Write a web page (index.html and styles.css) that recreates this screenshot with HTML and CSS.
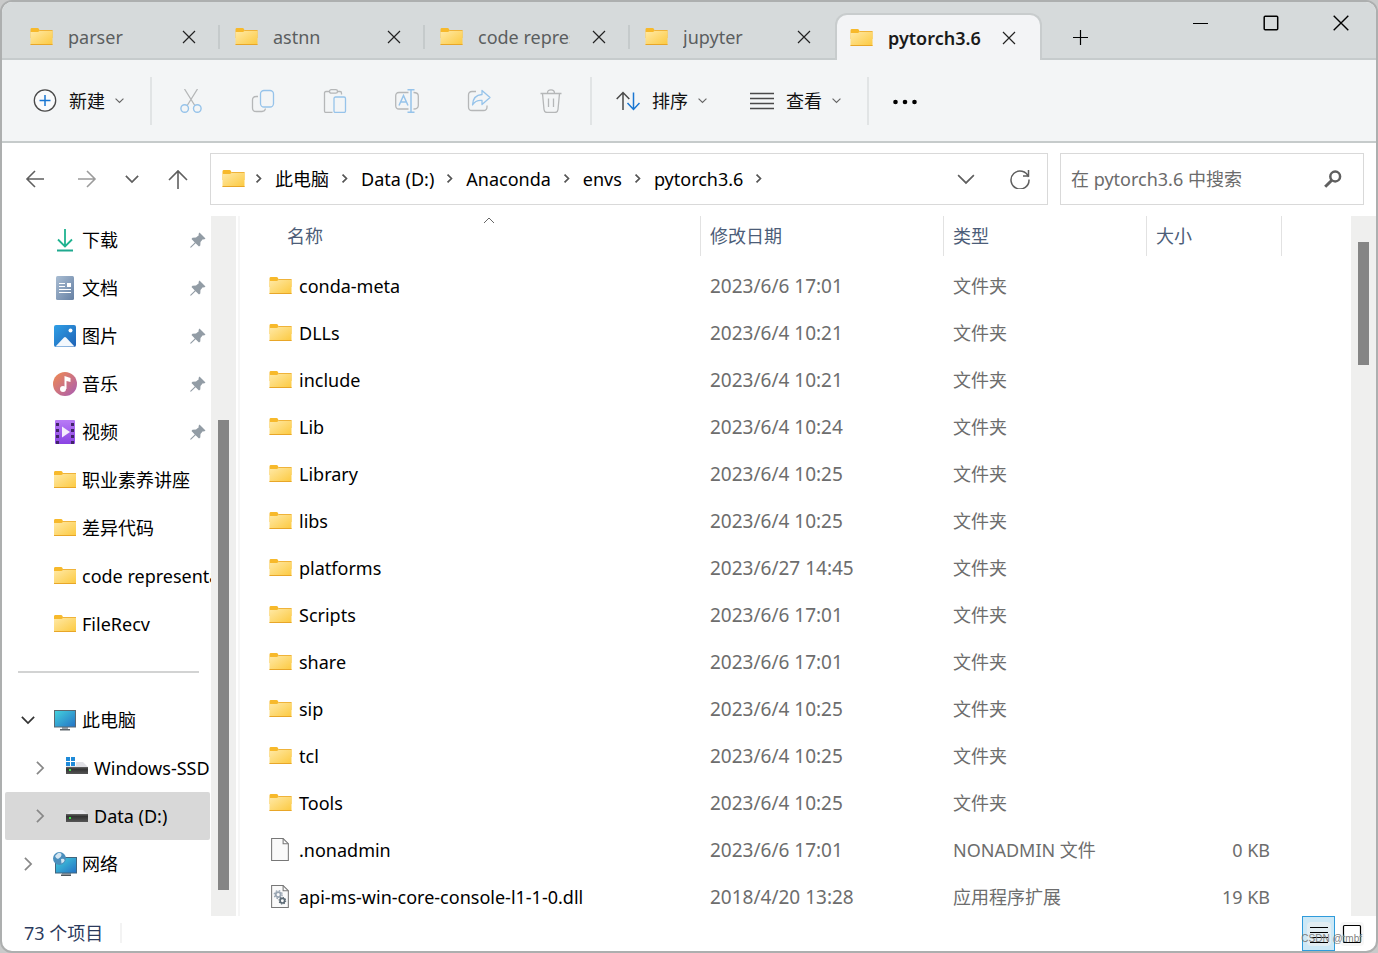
FILE: index.html
```html
<!DOCTYPE html>
<html lang="zh-CN">
<head>
<meta charset="utf-8">
<title>pytorch3.6</title>
<link rel="stylesheet" href="styles.css">
</head>
<body>
<svg class="sprite" aria-hidden="true">
  <defs>
    <linearGradient id="gFolder" x1="0" y1="0" x2="1" y2="1"><stop offset="0" stop-color="#ffe9a6"/><stop offset="1" stop-color="#fcc93f"/></linearGradient>
    <linearGradient id="gDown" x1="0" y1="0" x2="0" y2="1"><stop offset="0" stop-color="#2fc98a"/><stop offset="1" stop-color="#16a095"/></linearGradient>
    <linearGradient id="gDoc" x1="0" y1="0" x2="1" y2="1"><stop offset="0" stop-color="#a9bdd3"/><stop offset="1" stop-color="#6680a3"/></linearGradient>
    <linearGradient id="gPic" x1="0" y1="0" x2="1" y2="1"><stop offset="0" stop-color="#2f9fe6"/><stop offset="1" stop-color="#1f62b5"/></linearGradient>
    <linearGradient id="gMusic" x1="0" y1="0" x2="1" y2="1"><stop offset="0" stop-color="#f28b4e"/><stop offset="1" stop-color="#a85cb4"/></linearGradient>
    <linearGradient id="gVideo" x1="0" y1="0" x2="0" y2="1"><stop offset="0" stop-color="#b87bf6"/><stop offset="1" stop-color="#8a43e3"/></linearGradient>
    <linearGradient id="gScreen" x1="0" y1="0" x2="1" y2="1"><stop offset="0" stop-color="#44d3de"/><stop offset="1" stop-color="#2471c4"/></linearGradient>
    <linearGradient id="gDrive" x1="0" y1="0" x2="0" y2="1"><stop offset="0" stop-color="#666"/><stop offset="0.3" stop-color="#333"/><stop offset="1" stop-color="#555"/></linearGradient>
  </defs>
  <symbol id="folder" viewBox="0 0 22 18"><path d="M0 1.5Q0 0 1 0h6q1 0 1.500 1l.5 1.500H22V10H0z" fill="#f7b92b"/><path d="M0 4h7.500l1.500-1H22v14H0z" fill="url(#gFolder)"/><path d="M0 16.500h22" stroke="#e8a628"/><path d="M9 2.500h13" stroke="#efb33a"/></symbol>
  <symbol id="x" viewBox="0 0 14 14"><path d="M1 1l12 12M13 1L1 13" fill="none" stroke="currentColor" stroke-width="1.200"/></symbol>
  <symbol id="chev-down" viewBox="0 0 16 16"><path d="M1 4.500l7 7 7-7" fill="none" stroke="currentColor" stroke-width="var(--sw,1.500)"/></symbol>
  <symbol id="chev-right" viewBox="0 0 16 16"><path d="M4.500 1l7 7-7 7" fill="none" stroke="currentColor" stroke-width="var(--sw,1.500)"/></symbol>
  <symbol id="pin" viewBox="0 0 16 16"><path d="M9.500 0.500L15.500 6.500 14 7.500 12.800 7.200 10.500 10 10.300 13.500 9 14.500 5.600 11.200 1.200 15.600.2 15.800.4 14.800 4.800 10.400 1.500 7l1-1.200L6 5.500 8.800 3.200 8.500 2z" fill="#929ca5"/></symbol>
  <symbol id="drive" viewBox="0 0 22 12"><path d="M5 0h12l5 5H0z" fill="#e6e6ea"/><path d="M0 4h22v8H0z" fill="url(#gDrive)"/><path d="M3 7h2v2H3z" fill="#3ce04a"/></symbol>
</svg>

<div class="window">
  <header class="titlebar">
    <div class="tabs" role="tablist">
      <div class="tab"><svg class="folder"><use href="#folder"/></svg><span class="tab-name">parser</span><button class="tab-close" aria-label="关闭"><svg class="s14"><use href="#x"/></svg></button></div>
      <div class="tab"><svg class="folder"><use href="#folder"/></svg><span class="tab-name">astnn</span><button class="tab-close" aria-label="关闭"><svg class="s14"><use href="#x"/></svg></button></div>
      <div class="tab"><svg class="folder"><use href="#folder"/></svg><span class="tab-name">code representation</span><button class="tab-close" aria-label="关闭"><svg class="s14"><use href="#x"/></svg></button></div>
      <div class="tab last"><svg class="folder"><use href="#folder"/></svg><span class="tab-name">jupyter</span><button class="tab-close" aria-label="关闭"><svg class="s14"><use href="#x"/></svg></button></div>
      <div class="tab active"><svg class="folder"><use href="#folder"/></svg><span class="tab-name">pytorch3.6</span><button class="tab-close" aria-label="关闭"><svg class="s14"><use href="#x"/></svg></button></div>
      <button class="tab-new" aria-label="新标签页"><svg class="s16" viewBox="0 0 16 16"><path d="M8.500 1v15M1 8.500h15" stroke="currentColor" stroke-width="1.200"/></svg></button>
    </div>
    <div class="controls">
      <button aria-label="最小化"><svg class="s16" viewBox="0 0 16 16"><path d="M0 8.500h15" stroke="#000"/></svg></button>
      <button aria-label="最大化"><svg class="s16" viewBox="0 0 16 16"><rect x="1.200" y="1.200" width="13.500" height="13.500" rx="1" fill="none" stroke="#000" stroke-width="1.500"/></svg></button>
      <button aria-label="关闭窗口"><svg class="s16" viewBox="0 0 16 16"><path d="M.7.700l14.600 14.600M15.300.7L.7 15.300" stroke="#000" stroke-width="1.400"/></svg></button>
    </div>
  </header>

  <div class="toolbar" role="toolbar">
    <button class="tool new"><svg class="s24" viewBox="0 0 24 24"><circle cx="12" cy="11.500" r="10.700" fill="#fafbfc" stroke="#4a4a4a" stroke-width="1.300"/><path d="M12 6v11M6.500 11.500h11" stroke="#1976d2" stroke-width="1.500"/></svg><span>新建</span><svg class="s9"><use href="#chev-down"/></svg></button>
    <i class="sep"></i>
    <div class="icon-tools">
      <button aria-label="剪切" disabled><svg class="s24" viewBox="0 0 24 24"><path d="M5.500 0L15.800 16.500M18.500 0L8.200 16.500" stroke="#b5b7b8" stroke-width="1.300"/><g fill="none" stroke="#96c3ea" stroke-width="1.400"><circle cx="5.700" cy="19.500" r="3.800"/><circle cx="18.300" cy="19.500" r="3.800"/></g></svg></button>
      <button aria-label="复制" disabled><svg class="s24" viewBox="0 0 24 24" fill="none" stroke-width="1.300"><path d="M7 7.500H5Q1.500 7.500 1.500 11v8q0 3.500 3.500 3.500h6q3 0 3.500-3" stroke="#b5b7b8"/><rect x="9.500" y="1.500" width="13" height="16.500" rx="3.500" stroke="#96c3ea"/></svg></button>
      <button aria-label="粘贴" disabled><svg class="s24" viewBox="0 0 24 24" fill="none" stroke-width="1.300"><path d="M6.500 2.500H3q-1.500 0-1.500 1.500v18q0 1.500 1.500 1.500h6.500M14 2.500h3q1.500 0 1.500 1.500v1.500" stroke="#b5b7b8"/><rect x="6.500" y=".7" width="8" height="3.500" rx="1.700" stroke="#b5b7b8"/><rect x="11" y="8" width="11.500" height="15.500" rx="1.500" stroke="#96c3ea"/></svg></button>
      <button aria-label="重命名" disabled><svg class="s24" viewBox="0 0 24 24" fill="none" stroke-width="1.300"><path d="M13.500 3.500H4Q.7 3.500.7 7v9.500Q.7 20 4 20h9.500M18.500 3.500q4.800 0 4.800 3.500v9.500q0 3.500-4.800 3.500" stroke="#b5b7b8"/><path d="M16 .5v23M12.500.7h7M12.500 23.300h7M4 16.500L8.500 6.500 13 16.500M5.500 13h6" stroke="#96c3ea" stroke-width="1.500"/></svg></button>
      <button aria-label="共享" disabled><svg class="s24" viewBox="0 0 24 24" fill="none" stroke-width="1.300" stroke-linejoin="round"><path d="M9 2.500H5Q1.500 2.500 1.500 6v12q0 3.500 3.500 3.500h11.500q3.500 0 3.500-3.500v-1.500" stroke="#b5b7b8"/><path d="M15 1.500l8 7-8 7v-4q-6.500-.5-9.500 4.500Q6 6 15 5.500z" stroke="#96c3ea"/></svg></button>
      <button aria-label="删除" disabled><svg class="s24" viewBox="0 0 24 24" fill="none" stroke="#b5b7b8" stroke-width="1.300"><path d="M1.500 4.500h21M8.500 4q0-3.200 3.500-3.200T15.500 4M3.500 4.500l1.500 16q.3 3 3 3h8q2.700 0 3-3l1.500-16M9.500 9.500v8.500M14.500 9.500v8.500"/></svg></button>
    </div>
    <i class="sep"></i>
    <button class="tool sort"><svg class="s24" viewBox="0 0 24 24" fill="none" stroke-width="1.500"><path d="M7 21V4M.7 10L7 3.500l6.300 6.500" stroke="#4a4a4a"/><path d="M17.500 3.500V20.500M11.500 14l6 6.500 6-6.500" stroke="#1976d2"/></svg><span>排序</span><svg class="s9"><use href="#chev-down"/></svg></button>
    <button class="tool view"><svg class="s24" viewBox="0 0 24 24"><path d="M0 4.500h24M0 9.500h24M0 14.500h24M0 19.500h24" stroke="#4a4a4a" stroke-width="1.300"/></svg><span>查看</span><svg class="s9"><use href="#chev-down"/></svg></button>
    <i class="sep"></i>
    <button class="more" aria-label="更多"><svg class="s24" viewBox="0 0 24 24"><circle cx="2.500" cy="13" r="2.300"/><circle cx="12" cy="13" r="2.300"/><circle cx="21.500" cy="13" r="2.300"/></svg></button>
  </div>

  <div class="navbar">
    <div class="nav-buttons">
      <button class="b-back" aria-label="后退"><svg class="s20" viewBox="0 0 20 20"><path d="M19 10H2M10 2L2 10l8 8" fill="none" stroke="#5f5f5f" stroke-width="1.600"/></svg></button>
      <button class="b-fwd" aria-label="前进"><svg class="s20" viewBox="0 0 20 20"><path d="M1 10h17M10 2l8 8-8 8" fill="none" stroke="#9b9b9b" stroke-width="1.600"/></svg></button>
      <button class="b-recent" aria-label="最近"><svg class="s14 thick"><use href="#chev-down"/></svg></button>
      <button class="b-up" aria-label="上移"><svg class="s20" viewBox="0 0 20 20"><path d="M10 20V2M1 11l9-9 9 9" fill="none" stroke="#5f5f5f" stroke-width="1.600"/></svg></button>
    </div>
    <nav class="address">
      <svg class="folder"><use href="#folder"/></svg>
      <svg class="crumb"><use href="#chev-right"/></svg><button>此电脑</button>
      <svg class="crumb"><use href="#chev-right"/></svg><button>Data (D:)</button>
      <svg class="crumb"><use href="#chev-right"/></svg><button>Anaconda</button>
      <svg class="crumb"><use href="#chev-right"/></svg><button>envs</button>
      <svg class="crumb"><use href="#chev-right"/></svg><button>pytorch3.6</button>
      <svg class="crumb"><use href="#chev-right"/></svg>
      <span class="grow"></span>
      <button class="drop" aria-label="以前的位置"><svg class="s18"><use href="#chev-down"/></svg></button>
      <button class="refresh" aria-label="刷新"><svg class="s20" viewBox="0 0 20 20"><path d="M18.500 8A9 9 0 1 0 19 10.500M18.500 1v6h-5.500" fill="none" stroke="#5f5f5f" stroke-width="1.500"/></svg></button>
    </nav>
    <div class="search">
      <input type="search" placeholder="在 pytorch3.6 中搜索" aria-label="在 pytorch3.6 中搜索">
      <button aria-label="搜索"><svg class="s18" viewBox="0 0 18 18"><circle cx="11.200" cy="6.500" r="4.900" fill="none" stroke="#5f5f5f" stroke-width="2.500"/><path d="M7.800 10.200L1.200 16.800" stroke="#5f5f5f" stroke-width="3"/></svg></button>
    </div>
  </div>

  <main class="content">
    <aside class="sidebar">
      <a class="item" href="#"><svg class="ico" viewBox="0 0 24 24"><path d="M12 1v17M5 11.500l7 7 7-7" fill="none" stroke="#1fb390" stroke-width="1.800"/><path d="M4 22.500h16" stroke="#1fa98f" stroke-width="2"/></svg><span>下载</span><svg class="pin"><use href="#pin"/></svg></a>
      <a class="item" href="#"><svg class="ico" viewBox="0 0 24 24"><rect x="3" width="18" height="24" rx="1.500" fill="url(#gDoc)"/><path d="M6 7.500h6M6 10.500h6M6 13.500h12M6 16.500h12" stroke="#fff" stroke-width="1.200"/><path d="M14 7h4v4h-4z" fill="#fff"/></svg><span>文档</span><svg class="pin"><use href="#pin"/></svg></a>
      <a class="item" href="#"><svg class="ico" viewBox="0 0 24 24"><rect x="1" y="1" width="22" height="22" rx="2" fill="url(#gPic)"/><path d="M2.500 22.500L11 13.500q1-1 2 0l8.500 9z" fill="#f3f8fd"/><circle cx="17.500" cy="6.500" r="2" fill="#fff"/></svg><span>图片</span><svg class="pin"><use href="#pin"/></svg></a>
      <a class="item" href="#"><svg class="ico" viewBox="0 0 24 24"><circle cx="12" cy="12" r="12" fill="url(#gMusic)"/><circle cx="10" cy="17" r="3" fill="#fff"/><path d="M11.500 4l6 2v4l-4-1v8h-2z" fill="#fff"/></svg><span>音乐</span><svg class="pin"><use href="#pin"/></svg></a>
      <a class="item" href="#"><svg class="ico" viewBox="0 0 24 24"><rect x="2" width="20" height="24" rx="1" fill="url(#gVideo)"/><path d="M4.500 3v21M19.500 3v21" stroke="#42246b" stroke-width="3" stroke-dasharray="3 3"/><path d="M9 6.500l8 5.500-8 5.500z" fill="#f4ecfc"/></svg><span>视频</span><svg class="pin"><use href="#pin"/></svg></a>
      <a class="item" href="#"><svg class="ico-folder"><use href="#folder"/></svg><span>职业素养讲座</span></a>
      <a class="item" href="#"><svg class="ico-folder"><use href="#folder"/></svg><span>差异代码</span></a>
      <a class="item" href="#"><svg class="ico-folder"><use href="#folder"/></svg><span>code representation</span></a>
      <a class="item" href="#"><svg class="ico-folder"><use href="#folder"/></svg><span>FileRecv</span></a>
      <div class="divider"></div>
      <a class="item root" href="#"><svg class="s14 dark"><use href="#chev-down"/></svg><svg class="ico" viewBox="0 0 24 24"><path d="M9 19h6v2H9z" fill="#9aa3aa"/><path d="M7 21h10v1.500H7z" fill="#5e666c"/><rect x="1.500" y="2.500" width="21" height="16.500" fill="url(#gScreen)" stroke="#5c6870"/></svg><span>此电脑</span></a>
      <a class="item sub" href="#"><svg class="s14 light"><use href="#chev-right"/></svg><svg class="ico" viewBox="0 0 24 24"><path d="M6 6h12l5 5H1z" fill="#e1e1e6"/><path d="M1 11h22v7H1z" fill="url(#gDrive)"/><path d="M4 13h2v2H4z" fill="#3ce04a"/><path d="M1 1h10v9H1z" fill="#fff"/><path d="M1 1h4v4H1zM6 1h4v4H6zM1 6h4v4H1zM6 6h4v4H6z" fill="#1f8ad8"/></svg><span>Windows-SSD (C:)</span></a>
      <a class="item sub selected" href="#"><svg class="s14 light"><use href="#chev-right"/></svg><svg class="ico-drive"><use href="#drive"/></svg><span>Data (D:)</span></a>
      <a class="item root" href="#"><svg class="s14 light"><use href="#chev-right"/></svg><svg class="ico" viewBox="0 0 24 24"><path d="M9 21h9v1.500H9z" fill="#9aa3aa"/><path d="M8 22.500h10V24H8z" fill="#4e565c"/><rect x="2.500" y="5.500" width="21" height="15.500" fill="url(#gScreen)" stroke="#41657d"/><circle cx="6.500" cy="6.500" r="6.500" fill="#4b8fbd"/><path d="M2 4q4-5 6-2.500T5 7q-2 0-3-3zM8 7q3-1 3.500 1T8.500 11.500z" fill="#d3e6f2"/></svg><span>网络</span></a>
    </aside>
    <div class="scrollbar side-scroll"><div class="thumb"></div></div>

    <section class="files">
      <table>
        <colgroup><col class="c-name"><col class="c-date"><col class="c-type"><col class="c-size"><col></colgroup>
        <thead><tr>
          <th><div class="head first">名称<svg class="sort-mark" viewBox="0 0 12 7"><path d="M1 6l5-5 5 5" fill="none" stroke="#666"/></svg></div></th>
          <th><div class="head">修改日期</div></th><th><div class="head">类型</div></th><th><div class="head">大小</div></th><th></th>
        </tr></thead>
        <tbody>
          <tr><td><div class="name"><svg class="folder"><use href="#folder"/></svg>conda-meta</div></td><td class="date">2023/6/6 17:01</td><td>文件夹</td><td></td><td></td></tr>
          <tr><td><div class="name"><svg class="folder"><use href="#folder"/></svg>DLLs</div></td><td class="date">2023/6/4 10:21</td><td>文件夹</td><td></td><td></td></tr>
          <tr><td><div class="name"><svg class="folder"><use href="#folder"/></svg>include</div></td><td class="date">2023/6/4 10:21</td><td>文件夹</td><td></td><td></td></tr>
          <tr><td><div class="name"><svg class="folder"><use href="#folder"/></svg>Lib</div></td><td class="date">2023/6/4 10:24</td><td>文件夹</td><td></td><td></td></tr>
          <tr><td><div class="name"><svg class="folder"><use href="#folder"/></svg>Library</div></td><td class="date">2023/6/4 10:25</td><td>文件夹</td><td></td><td></td></tr>
          <tr><td><div class="name"><svg class="folder"><use href="#folder"/></svg>libs</div></td><td class="date">2023/6/4 10:25</td><td>文件夹</td><td></td><td></td></tr>
          <tr><td><div class="name"><svg class="folder"><use href="#folder"/></svg>platforms</div></td><td class="date">2023/6/27 14:45</td><td>文件夹</td><td></td><td></td></tr>
          <tr><td><div class="name"><svg class="folder"><use href="#folder"/></svg>Scripts</div></td><td class="date">2023/6/6 17:01</td><td>文件夹</td><td></td><td></td></tr>
          <tr><td><div class="name"><svg class="folder"><use href="#folder"/></svg>share</div></td><td class="date">2023/6/6 17:01</td><td>文件夹</td><td></td><td></td></tr>
          <tr><td><div class="name"><svg class="folder"><use href="#folder"/></svg>sip</div></td><td class="date">2023/6/4 10:25</td><td>文件夹</td><td></td><td></td></tr>
          <tr><td><div class="name"><svg class="folder"><use href="#folder"/></svg>tcl</div></td><td class="date">2023/6/4 10:25</td><td>文件夹</td><td></td><td></td></tr>
          <tr><td><div class="name"><svg class="folder"><use href="#folder"/></svg>Tools</div></td><td class="date">2023/6/4 10:25</td><td>文件夹</td><td></td><td></td></tr>
          <tr><td><div class="name"><svg class="page" viewBox="0 0 22 22"><path d="M2.500.5h11l5 5v16h-16z" fill="#fafafa" stroke="#777"/><path d="M13.500.5v5h5" fill="none" stroke="#777"/></svg>.nonadmin</div></td><td class="date">2023/6/6 17:01</td><td>NONADMIN 文件</td><td class="size">0 KB</td><td></td></tr>
          <tr><td><div class="name"><svg class="page" viewBox="0 0 22 22"><path d="M2.500.5h11l5 5v16h-16z" fill="#fafafa" stroke="#777"/><path d="M13.500.5v5h5" fill="none" stroke="#777"/><circle cx="8.800" cy="9.200" r="2.400" fill="none" stroke="#9aa6b3" stroke-width="1.800"/><circle cx="8.800" cy="9.200" r="3.800" fill="none" stroke="#9aa6b3" stroke-width="1.200" stroke-dasharray="1.500 1.500"/><circle cx="12.800" cy="15" r="2.200" fill="none" stroke="#5d6b76" stroke-width="1.600"/><circle cx="12.800" cy="15" r="3.200" fill="none" stroke="#5d6b76" stroke-dasharray="1.200 1.300"/></svg>api-ms-win-core-console-l1-1-0.dll</div></td><td class="date">2018/4/20 13:28</td><td>应用程序扩展</td><td class="size">19 KB</td><td></td></tr>
        </tbody>
      </table>
    </section>
    <div class="scrollbar main-scroll"><div class="thumb"></div></div>
  </main>

  <footer class="status">
    <span class="count">73 个项目</span>
    <div class="modes">
      <button class="mode on" aria-label="详细信息"><svg viewBox="0 0 24 24" class="s24"><path d="M3 5.500h18M3 10.500h18M3 15.500h18M3 20.500h18" stroke="#000"/></svg></button>
      <button class="mode" aria-label="大图标"><svg viewBox="0 0 24 24" class="s24"><rect x="3.500" y="3.500" width="17" height="17" rx="1" fill="#fff" stroke="#000" stroke-width="1.200"/></svg></button>
    </div>
    <span class="watermark">CSDN @tmbf</span>
  </footer>
</div>
</body>
</html>
```
FILE: styles.css
```css
* { box-sizing: border-box; }

body {
  margin: 0;
  height: 100vh;
  background: #c9caca;
  color: #000;
  font: 18px/24px "Noto Sans", "Noto Sans CJK SC", sans-serif;
}

button {
  margin: 0;
  padding: 0;
  border: 0;
  background: none;
  color: inherit;
  font: inherit;
  display: flex;
  align-items: center;
  justify-content: center;
}

svg { display: block; flex: none; }
.sprite { position: absolute; width: 0; height: 0; }

.folder { width: 23px; height: 18px; }
.s9 { width: 9px; height: 9px; }
.s14 { width: 14px; height: 14px; }
.s16 { width: 16px; height: 16px; }
.s18 { width: 18px; height: 18px; }
.s20 { width: 20px; height: 20px; }
.s24 { width: 24px; height: 24px; }

.window {
  height: 100vh;
  display: flex;
  flex-direction: column;
  border: 2px solid #adafaf;
  border-radius: 12px;
  background: #fff;
  overflow: hidden;
}

/* title bar and tabs */
.titlebar {
  flex: none;
  height: 58px;
  display: flex;
  justify-content: space-between;
  background: #d6dadb;
  box-shadow: inset 0 -2px #c6cbcc;
}
.tabs { display: flex; align-items: flex-end; padding-left: 13px; }
.tab {
  width: 205px;
  height: 47px;
  display: flex;
  align-items: center;
  padding-left: 15px;
  color: #5b5e5f;
  position: relative;
}
.tab::after {
  content: "";
  position: absolute;
  right: 0;
  top: 12px;
  width: 2px;
  height: 24px;
  background: #c5cacb;
}
.tab.last::after, .tab.active::after { display: none; }
.tab-name { width: 92px; margin-left: 15px; overflow: hidden; white-space: nowrap; }
.tab-close { width: 58px; height: 32px; color: #222; }
.tab.active {
  width: 207px;
  background: #f3f4f6;
  border: 2px solid #c8cccd;
  border-bottom: 0;
  border-radius: 12px 12px 0 0;
  padding-left: 13px;
  color: #1a1a1a;
  font-weight: 600;
}
.tab.active .tab-name { overflow: visible; }
.tab-new { width: 75px; height: 46px; }
.controls { display: flex; }
.controls button { width: 70px; height: 42px; }

/* command bar */
.toolbar {
  flex: none;
  height: 83px;
  display: flex;
  align-items: center;
  background: #f3f5f6;
  border-bottom: 2px solid #c6cbcb;
}
.tool { height: 48px; color: #111; }
.tool span { margin: 0 10px 0 12px; }
.tool .s9 { color: #666; --sw: 2; }
.new { padding: 0 26px 0 31px; }
.sort { padding: 0 43px 0 24px; }
.view { padding: 0 26px 0 0; }
.sep { width: 2px; height: 48px; background: #e1e4e5; }
.icon-tools { display: flex; padding: 0 3px; }
.icon-tools button { width: 72px; height: 48px; }
.more { width: 72px; height: 48px; }

/* navigation row */
.navbar {
  flex: none;
  height: 73px;
  display: flex;
  align-items: center;
  padding: 0 12px 2px 0;
}
.nav-buttons { width: 208px; display: flex; color: #5f5f5f; padding-left: 8px; }
.nav-buttons button { height: 48px; }
.b-back { width: 50px; }
.b-fwd { width: 54px; }
.b-recent { width: 36px; }
.b-up { width: 56px; }
.thick { --sw: 2; }
.address {
  flex: 1;
  height: 52px;
  display: flex;
  align-items: center;
  border: 1px solid #d9d9d9;
  padding-left: 11px;
}
.crumb { width: 9px; height: 9px; margin: 0 12px 0 11px; color: #555; --sw: 3; }
.folder + .crumb { margin-left: 9px; }
.address button { white-space: nowrap; }
.grow { flex: 1; }
.address .drop { width: 54px; height: 50px; color: #5f5f5f; }
.address .refresh { width: 54px; height: 50px; }
.search {
  width: 304px;
  height: 52px;
  margin-left: 12px;
  display: flex;
  border: 1px solid #d9d9d9;
}
.search input {
  flex: 1;
  min-width: 0;
  border: 0;
  outline: 0;
  padding: 0 0 0 10px;
  background: none;
  font: inherit;
}
.search input::placeholder { color: #6b6b6b; opacity: 1; }
.search button { width: 60px; }

/* content */
.content { flex: 1; min-height: 0; display: flex; overflow: hidden; }
.sidebar { width: 209px; flex: none; overflow: hidden; }
.item {
  height: 48px;
  display: flex;
  align-items: center;
  padding-left: 51px;
  color: #000;
  text-decoration: none;
  white-space: nowrap;
  overflow: hidden;
}
.ico { width: 24px; height: 24px; margin-right: 5px; }
.ico-folder { width: 24px; height: 18px; margin-right: 5px; }
.ico-drive { width: 24px; height: 12px; margin-right: 5px; }
.pin { width: 16px; height: 16px; margin: 0 5px 0 auto; }
.root { padding-left: 19px; }
.root > :first-child { margin-right: 18px; }
.sub { padding-left: 31px; }
.sub > :first-child { margin-right: 18px; }
.dark { color: #333; --sw: 2; }
.light { color: #888; --sw: 2; }
.selected {
  margin: 0 1px 0 3px;
  padding-left: 28px;
  border-radius: 2px;
  background: #d8d8d8;
}
.divider { height: 48px; padding: 23px 12px 0 16px; }
.divider::before { content: ""; display: block; height: 2px; background: #d2d3d3; }

.scrollbar { flex: none; width: 25px; background: #efefee; display: flex; justify-content: center; }
.thumb { width: 11px; background: #858585; }
.side-scroll .thumb { margin-top: 204px; height: 470px; }
.main-scroll .thumb { margin-top: 26px; height: 123px; }

.files { flex: 1; min-width: 0; margin-left: 2px; border-left: 2px solid #f6f6f6; overflow: hidden; }
table { width: 100%; table-layout: fixed; border-collapse: collapse; }
.c-name { width: 461px; }
.c-date { width: 243px; }
.c-type { width: 203px; }
.c-size { width: 135px; }
th { height: 46px; padding: 0; vertical-align: top; font-weight: 400; text-align: left; color: #4c5d78; }
.head { height: 40px; padding: 8px 0 0 9px; border-right: 1px solid #e2e2e2; position: relative; }
.head.first { padding-left: 47px; }
.sort-mark { position: absolute; left: 243px; top: 1px; width: 12px; height: 7px; }
td { height: 47px; padding: 0 0 0 9px; color: #6d6d6d; white-space: nowrap; }
td:first-child { padding-left: 29px; color: #000; }
td.date { font-size: 19px; }
td.size { text-align: right; padding-right: 12px; }
.name { display: flex; align-items: center; gap: 7px; }
.page { width: 23px; height: 23px; }

/* status bar */
.status { flex: none; height: 35px; display: flex; align-items: center; position: relative; }
.count { margin-bottom: 2px; padding: 0 17px 0 22px; color: #2b3a5c; line-height: 20px; border-right: 2px solid #f3f3f3; }
.modes { margin: 0 8px 0 auto; display: flex; }
.mode { width: 33px; height: 35px; border: 1px solid transparent; }
.mode.on { background: #cce8f6; border-color: #2f9bdb; }
.mode svg { background: rgba(240, 240, 240, 0.6); border-radius: 4px; }
.watermark {
  position: absolute;
  right: 14px;
  bottom: 4px;
  color: #808080;
  font: 10px/16px "Liberation Sans", sans-serif;
}
```
